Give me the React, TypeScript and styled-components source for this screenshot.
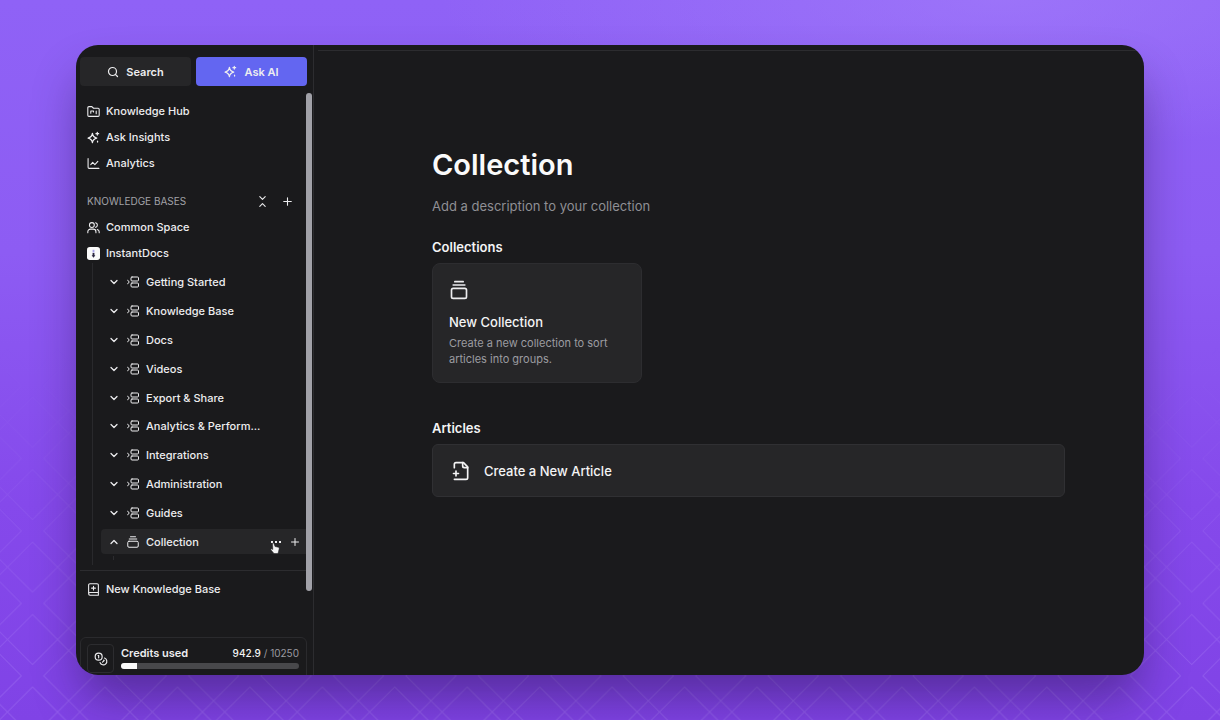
import React from "react";
import styled, { createGlobalStyle, css } from "styled-components";
import { Search, ChevronDown, ChevronUp, Plus, GalleryVerticalEnd, Coins } from "lucide-react";

const GlobalStyle = createGlobalStyle`
  *, *::before, *::after { box-sizing: border-box; }
  body { margin: 0; font-family: Inter, "Liberation Sans", sans-serif; color: #ededef; background: #8348ea; }
  button { font: inherit; color: inherit; border: 0; background: none; padding: 0; cursor: pointer; }
  a { color: inherit; text-decoration: none; }
  ul { list-style: none; margin: 0; padding: 0; }
  h1, h2, h3, p { margin: 0; }
  svg { flex: none; display: block; }
`;

const Stage = styled.div`
  position: relative;
  height: 100vh;
  min-height: 480px;
  padding: 45px 76px;
  display: flex;
  overflow: hidden;
  background:
    radial-gradient(ellipse 560px 150px at 82% 0%, rgba(168, 132, 252, 0.5), rgba(168, 132, 252, 0)),
    linear-gradient(180deg, #8f62f6 0%, #8d5cf3 35%, #8549eb 70%, #8043e6 100%);
`;

const Lattice = styled.svg`
  position: absolute;
  inset: 0;
  width: 100%;
  height: 100%;
`;

const Window = styled.div`
  position: relative;
  flex: 1;
  min-width: 0;
  display: flex;
  border-radius: 22px;
  overflow: hidden;
  background: #1a1a1c;
  box-shadow: 0 28px 48px -6px rgba(30, 14, 60, 0.44);
`;

const Sidebar = styled.aside`
  width: 238px;
  flex: none;
  display: flex;
  flex-direction: column;
  padding: 12px 0 0 4px;
  border-right: 1px solid #2c2c2f;
  overflow: hidden;
`;

const Actions = styled.div`
  display: flex;
  flex: none;
  gap: 5px;
  padding-right: 6px;
  margin-bottom: 7px;
`;

const ActionButton = styled.button<{ $primary?: boolean }>`
  flex: 1;
  height: 29px;
  border-radius: 4px;
  display: flex;
  align-items: center;
  justify-content: center;
  gap: 7px;
  font-size: 11px;
  font-weight: 600;
  background: ${(p) => (p.$primary ? "#6366f1" : "#262628")};
`;

const Scroller = styled.div`
  display: flex;
  flex: none;
  height: 498px;
`;

const Nav = styled.nav`
  flex: 1;
  min-width: 0;
  padding-top: 5px;
`;

const Thumb = styled.div`
  width: 6px;
  margin-right: 1px;
  border-radius: 3px;
  background: #a1a1a8;
`;

const NavLink = styled.a`
  height: 26px;
  padding-left: 7px;
  display: flex;
  align-items: center;
  gap: 6px;
  font-size: 11px;
  font-weight: 500;
`;

const GroupHead = styled.div`
  height: 26px;
  margin-top: 12px;
  padding: 0 12px 0 7px;
  display: flex;
  align-items: center;
  font-size: 10px;
  color: #a2a2a8;
`;

const GroupTools = styled.div`
  margin-left: auto;
  display: flex;
  gap: 12px;
  color: #ededef;
`;

const Tree = styled.ul`
  display: grid;
  grid-auto-rows: 1fr;
  height: 302px;
  margin: -3px 0 5px 12px;
  padding: 5px 0 9px 8px;
  border-left: 1px solid #29292c;
`;

const TreeItem = styled.li<{ $open?: boolean }>`
  position: relative;
  display: flex;
  align-items: center;
  ${(p) => p.$open && css`
    &::after {
      content: "";
      position: absolute;
      left: 12px;
      top: 100%;
      height: 4px;
      border-left: 1px solid #2c2c2f;
    }
  `}
`;

const TreeRow = styled.div<{ $active?: boolean }>`
  flex: 1;
  min-width: 0;
  height: 25px;
  padding: 0 5px 0 7px;
  display: flex;
  align-items: center;
  gap: 7px;
  font-size: 11px;
  font-weight: 500;
  border-radius: 4px 0 0 4px;
  ${(p) => p.$active && css`background: #262628;`}
`;

const TreeLabel = styled.a`
  white-space: nowrap;
`;

const RowTools = styled.div`
  position: relative;
  margin-left: auto;
  display: flex;
  gap: 7px;
`;

const Pointer = styled.svg`
  position: absolute;
  left: 0;
  top: 6px;
`;

const Footer = styled.div`
  border-top: 1px solid #2c2c2f;
  padding-top: 5px;
`;

const Credits = styled.section`
  flex: none;
  margin: 46px 6px 0 0;
  height: 48px;
  padding: 6px 7px 6px 6px;
  display: flex;
  gap: 7px;
  border: 1px solid #2a2a2d;
  border-radius: 6px;
`;

const CoinBox = styled.div`
  width: 27px;
  height: 29px;
  border: 1px solid #2c2c2f;
  border-radius: 4px;
  display: grid;
  place-items: center;
`;

const CreditsBody = styled.div`
  flex: 1;
`;

const CreditsLine = styled.div`
  height: 17px;
  margin-bottom: 2px;
  display: flex;
  align-items: center;
  justify-content: space-between;
  font-size: 11px;
  font-weight: 600;
`;

const Amount = styled.span`
  font-size: 10px;
  color: #9b9ba1;
  font-weight: 400;
  strong { color: #f4f4f5; font-weight: 500; }
`;

const Meter = styled.div`
  height: 6px;
  border-radius: 3px;
  background: #48484b;
  overflow: hidden;
`;

const MeterFill = styled.div`
  height: 100%;
  background: #fafafa;
`;

const Main = styled.main`
  flex: 1;
  min-width: 0;
  padding-top: 5px;
`;

const TopRule = styled.div`
  height: 1px;
  margin: 0 8px 0 4px;
  background: #2c2c2f;
`;

const Page = styled.div`
  padding: 96px 79px 0 118px;
`;

const Title = styled.h1`
  font-size: 29px;
  line-height: 36px;
  font-weight: 600;
  color: #fafafa;
`;

const Lead = styled.p`
  margin-top: 13px;
  font-size: 13px;
  line-height: 20px;
  color: #8f8f94;
`;

const SectionTitle = styled.h2<{ $spaced?: boolean }>`
  margin-top: ${(p) => (p.$spaced ? 35 : 21)}px;
  margin-bottom: 6px;
  font-size: 13px;
  line-height: 20px;
  font-weight: 600;
  color: #f4f4f5;
`;

const Tile = styled.button`
  width: 210px;
  height: 120px;
  padding: 16px;
  display: flex;
  flex-direction: column;
  align-items: flex-start;
  text-align: left;
  border: 1px solid #2d2d30;
  border-radius: 8px;
  background: #262628;
`;

const TileTitle = styled.span`
  margin-top: 12px;
  font-size: 13px;
  line-height: 20px;
  font-weight: 500;
  color: #f4f4f5;
`;

const TileText = styled.span`
  margin-top: 3px;
  font-size: 11px;
  line-height: 16px;
  color: #9c9ca1;
`;

const ArticleButton = styled.button`
  width: 100%;
  height: 53px;
  padding: 0 18px;
  display: flex;
  align-items: center;
  gap: 13px;
  border: 1px solid #303033;
  border-radius: 6px;
  background: #262628;
  font-size: 13px;
  font-weight: 500;
  color: #f4f4f5;
`;

type IconProps = { size?: number; children?: React.ReactNode; width?: number };

const Icon = ({ size = 13, width = 2, children }: IconProps) => (
  <svg width={size} height={size} viewBox="0 0 24 24" fill="none" stroke="currentColor" strokeWidth={width} strokeLinecap="round" strokeLinejoin="round" aria-hidden="true">
    {children}
  </svg>
);

const SparkIcon = () => (
  <Icon width={2.3}>
    <path d="M10 4.500 Q11 11.500 18 13 Q11 14.500 10 21.500 Q9 14.500 2 13 Q9 11.500 10 4.500 Z" />
    <path d="M19 2.500v5M16.500 5h5" />
    <path d="M19.500 18.500v2" />
  </Icon>
);

const HubIcon = () => (
  <Icon>
    <path d="M1.500 19V5a2 2 0 0 1 2-2H9l3 3h8.500a2 2 0 0 1 2 2v11a2 2 0 0 1-2 2h-17a2 2 0 0 1-2-2Z" />
    <path d="M7 11v4M7 11h5v2M17 11v5" />
  </Icon>
);

const AnalyticsIcon = () => (
  <Icon>
    <path d="M2 3v16a2 2 0 0 0 2 2h18" />
    <path d="m7 14 3.500-4 4 4L20 8" />
  </Icon>
);

const PeopleIcon = () => (
  <Icon>
    <circle cx="9" cy="7.500" r="4.500" />
    <path d="M1.500 21.500v-1.500a5 5 0 0 1 5-5h5a5 5 0 0 1 5 5v1.500" />
    <path d="M16 3.200a4.500 4.500 0 0 1 0 8.600M19 15.500a5 5 0 0 1 3.500 4.500v1.500" />
  </Icon>
);

const CollapseIcon = () => (
  <Icon size={13}>
    <path d="m7 3 5 5 5-5M7 21l5-5 5 5" />
  </Icon>
);

const GroupIcon = () => (
  <Icon size={12}>
    <path d="m1 8 3.500 4L1 16" />
    <rect x="8" y="2" width="15" height="8" rx="2" />
    <rect x="8" y="14" width="15" height="8" rx="2" />
  </Icon>
);

const StackIcon = () => (
  <Icon size={12}>
    <path d="M7 1.500h10M4.500 6h15" />
    <rect x="1.500" y="10.500" width="21" height="12" rx="2.500" />
  </Icon>
);

const BookIcon = () => (
  <Icon>
    <path d="M3 19.500V4a2.500 2.500 0 0 1 2.500-2.500h13A2.500 2.500 0 0 1 21 4v18.500H5.500A2.500 2.500 0 0 1 3 20a2.500 2.500 0 0 1 2.500-2.500H21" />
    <path d="M12 6v7M8.500 9.500h7" />
  </Icon>
);

const DocsLogo = () => (
  <svg width="13" height="13" viewBox="0 0 14 14" aria-hidden="true">
    <rect width="14" height="14" rx="3" fill="#fafafa" />
    <rect x="6" y="3" width="2" height="3" fill="#a9a4e8" />
    <path d="M6 6.500h2V9h1L7 11.500 5 9h1z" fill="#2b2740" />
  </svg>
);

const ArticleIcon = () => (
  <Icon size={20}>
    <path d="M4 22h14a2 2 0 0 0 2-2V7l-5-5H6a2 2 0 0 0-2 2v4" />
    <path d="M14 2v4a2 2 0 0 0 2 2h4M3 15h6M6 12v6" />
  </Icon>
);

const DotsIcon = () => (
  <svg width="12" height="12" viewBox="0 0 12 12" fill="currentColor" aria-hidden="true">
    <rect x="1" y="5" width="2" height="2" /><rect x="5" y="5" width="2" height="2" /><rect x="9" y="5" width="2" height="2" />
  </svg>
);

const PERIOD = 72.45;
const HALF = 61.3;

const Background = () => (
  <Lattice aria-hidden="true">
    <defs>
      <pattern id="lattice" width={PERIOD} height={PERIOD} patternUnits="userSpaceOnUse">
        {[-1, 0, 1].flatMap((i) =>
          [-1, 0, 1].map((j) => {
            const cx = 32.5 + i * PERIOD;
            const cy = 23.7 + j * PERIOD;
            return (
              <path key={`${i}${j}`} fill="none" stroke="#c4a6ff" strokeWidth="1"
                d={`M${cx} ${cy - HALF}L${cx + HALF} ${cy}L${cx} ${cy + HALF}L${cx - HALF} ${cy}Z`} />
            );
          })
        )}
      </pattern>
      <linearGradient id="fade" x1="0" y1="0" x2="0" y2="1">
        <stop offset="0.48" stopColor="#fff" stopOpacity="0" />
        <stop offset="1" stopColor="#fff" stopOpacity="0.26" />
      </linearGradient>
      <mask id="fadeMask"><rect width="100%" height="100%" fill="url(#fade)" /></mask>
    </defs>
    <rect width="100%" height="100%" fill="url(#lattice)" mask="url(#fadeMask)" />
  </Lattice>
);

const groups = ["Getting Started", "Knowledge Base", "Docs", "Videos", "Export & Share", "Analytics & Perform...", "Integrations", "Administration", "Guides"];

export default function App() {
  const used = 942.9;
  const total = 10250;
  return (
    <>
      <GlobalStyle />
      <Stage>
        <Background />
        <Window>
          <Sidebar>
            <Actions>
              <ActionButton><Search size={12} strokeWidth={2.4} />Search</ActionButton>
              <ActionButton $primary><SparkIcon />Ask AI</ActionButton>
            </Actions>
            <Scroller>
              <Nav>
                <NavLink href="#hub"><HubIcon />Knowledge Hub</NavLink>
                <NavLink href="#insights"><SparkIcon />Ask Insights</NavLink>
                <NavLink href="#analytics"><AnalyticsIcon />Analytics</NavLink>
                <GroupHead>
                  KNOWLEDGE BASES
                  <GroupTools>
                    <button aria-label="Collapse all"><CollapseIcon /></button>
                    <button aria-label="Add knowledge base"><Plus size={13} /></button>
                  </GroupTools>
                </GroupHead>
                <NavLink href="#common"><PeopleIcon />Common Space</NavLink>
                <NavLink href="#instantdocs"><DocsLogo />InstantDocs</NavLink>
                <Tree>
                  {groups.map((name) => (
                    <TreeItem key={name}>
                      <TreeRow>
                        <ChevronDown size={12} strokeWidth={2.5} /><GroupIcon /><TreeLabel href="#group">{name}</TreeLabel>
                      </TreeRow>
                    </TreeItem>
                  ))}
                  <TreeItem $open>
                    <TreeRow $active>
                      <ChevronUp size={12} strokeWidth={2.5} /><StackIcon /><TreeLabel href="#collection">Collection</TreeLabel>
                      <RowTools>
                        <button aria-label="More"><DotsIcon /></button>
                        <button aria-label="Add to collection"><Plus size={12} /></button>
                        <Pointer width="10" height="12" viewBox="0 0 10 12" aria-hidden="true">
                          <path d="M2.500 1.300q1-.8 1.500.4L5 4.500l3.400.8q1 .3.800 1.400L8.500 9.500 8 11.500H4L.8 7.700q0-1 1-.8l1 .6z" fill="#f4f4f5" stroke="#1a1a1c" strokeWidth=".5" />
                        </Pointer>
                      </RowTools>
                    </TreeRow>
                  </TreeItem>
                </Tree>
                <Footer>
                  <NavLink href="#new"><BookIcon />New Knowledge Base</NavLink>
                </Footer>
              </Nav>
              <Thumb />
            </Scroller>
            <Credits>
              <CoinBox><Coins size={14} /></CoinBox>
              <CreditsBody>
                <CreditsLine>
                  Credits used
                  <Amount><strong>{used}</strong> / {total}</Amount>
                </CreditsLine>
                <Meter role="progressbar" aria-label="Credits used" aria-valuenow={used} aria-valuemax={total}>
                  <MeterFill style={{ width: `${(used / total) * 100}%` }} />
                </Meter>
              </CreditsBody>
            </Credits>
          </Sidebar>
          <Main>
            <TopRule />
            <Page>
              <Title>Collection</Title>
              <Lead>Add a description to your collection</Lead>
              <SectionTitle>Collections</SectionTitle>
              <Tile>
                <GalleryVerticalEnd size={20} />
                <TileTitle>New Collection</TileTitle>
                <TileText>Create a new collection to sort articles into groups.</TileText>
              </Tile>
              <SectionTitle $spaced>Articles</SectionTitle>
              <ArticleButton><ArticleIcon />Create a New Article</ArticleButton>
            </Page>
          </Main>
        </Window>
      </Stage>
    </>
  );
}
